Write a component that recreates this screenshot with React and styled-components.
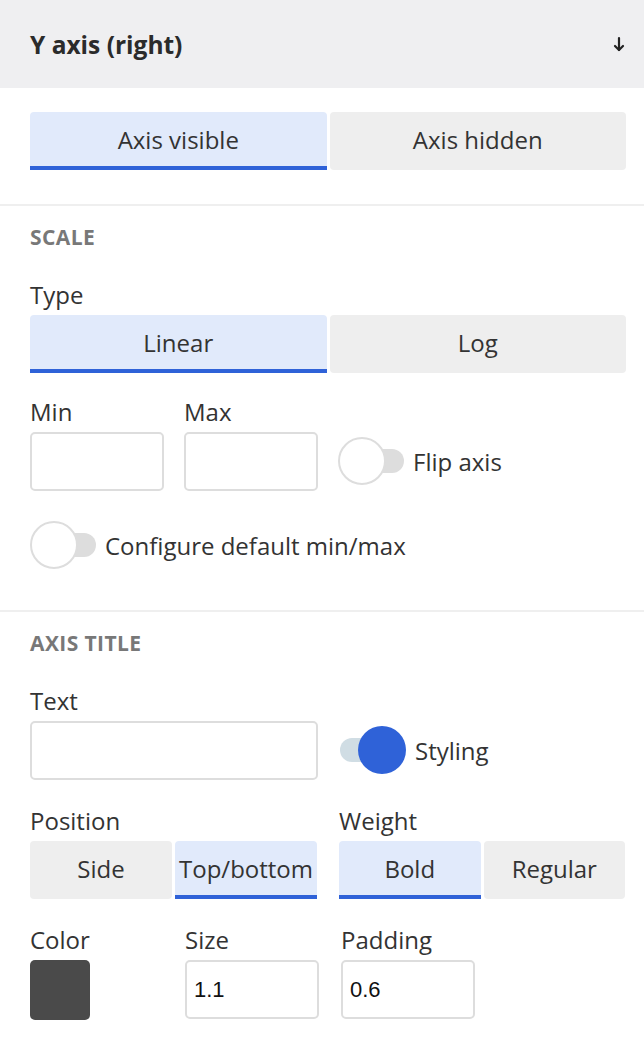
import styled, { createGlobalStyle } from 'styled-components';

const GlobalStyle = createGlobalStyle`
  html, body {
    margin: 0;
    padding: 0;
    background: #fff;
  }
  body {
    font-family: "Open Sans", "Noto Sans", sans-serif;
    color: #333;
  }
  * { box-sizing: border-box; }
`

const Panel = styled.div`
  width: 644px;
  background: #fff;
`

const Header = styled.div`
  height: 88px;
  background: #efeff1;
  display: flex;
  align-items: center;
  justify-content: space-between;
  padding: 0 18px 0 30px;
`

const Title = styled.h2`
  margin: 0;
  font-size: 24.5px;
  font-weight: 700;
  color: #2b2b2b;
`

const Section = styled.div`
  padding: ${p => p.pad || '24px 18px 34px 30px'};
  border-top: ${p => p.first ? 'none' : '2px solid #efefef'};
  display: flex;
  flex-direction: column;
`

const SectionTitle = styled.div`
  font-size: 21px;
  font-weight: 700;
  color: #787878;
  line-height: 24px;
  letter-spacing: 0.4px;
  margin-bottom: 33px;
`

const Label = styled.div`
  font-size: 24px;
  color: #333;
  line-height: 26px;
  margin-bottom: 7px;
`

const Segmented = styled.div`
  display: flex;
  gap: 3px;
  height: 58px;
  width: ${p => p.width || '100%'};
`

const SegButton = styled.button`
  flex: 1;
  border: none;
  margin: 0;
  padding: 0;
  font-family: inherit;
  font-size: 24px;
  color: #333;
  background: ${p => p.active ? '#e1eafb' : '#eeeeee'};
  border-bottom: 4px solid ${p => p.active ? '#2f62d8' : 'transparent'};
  border-radius: ${p => p.active ? '4px 4px 0 0' : '4px'};
  white-space: nowrap;
`

const Row = styled.div`
  display: flex;
  align-items: ${p => p.align || 'flex-start'};
  gap: ${p => p.gap || '20px'};
  margin-top: ${p => p.top || '0'};
`

const Field = styled.div`
  display: flex;
  flex-direction: column;
  width: ${p => p.width || 'auto'};
`

const ToggleField = styled.div`
  display: flex;
  margin-bottom: 6px;
`

const Input = styled.input`
  width: ${p => p.width || '134px'};
  height: 59px;
  border: 2px solid #dddddd;
  border-radius: 5px;
  font-family: "Liberation Sans", Arial, sans-serif;
  font-size: 22px;
  color: #111;
  padding: 0 7px;
  outline: none;
`

const Swatch = styled.div`
  width: 60px;
  height: 60px;
  border-radius: 5px;
  background: #4a4a4a;
`

const ToggleWrap = styled.label`
  display: flex;
  align-items: center;
  gap: 9px;
  font-size: 24px;
  color: #333;
`

const Track = styled.span`
  position: relative;
  display: inline-block;
  width: 66px;
  height: 48px;
  flex: none;
  &::before {
    content: '';
    position: absolute;
    left: ${p => p.on ? '0' : '22px'};
    top: 12px;
    width: 44px;
    height: 24px;
    border-radius: 12px;
    background: ${p => p.on ? '#d0dde4' : '#dddddd'};
  }
`

const Knob = styled.span`
  position: absolute;
  top: 0;
  left: ${p => p.on ? '18px' : '0'};
  width: 48px;
  height: 48px;
  border-radius: 50%;
  background: ${p => p.on ? '#2f62d8' : '#fff'};
  border: ${p => p.on ? 'none' : '2px solid #dddddd'};
`

function Toggle({ on, children }) {
  return (
    <ToggleWrap>
      <Track on={on}><Knob on={on} /></Track>
      {children}
    </ToggleWrap>
  );
}

const Arrow = () => (
  <svg width="14" height="18" viewBox="0 0 14 18" fill="none" stroke="#222" strokeWidth="2.2" strokeLinecap="round" strokeLinejoin="round">
    <path d="M7 3 V15" />
    <path d="M3 11 L7 15 L11 11" />
  </svg>
);

export default function App() {
  return (
    <Panel>
      <GlobalStyle />
      <Header>
        <Title>Y axis (right)</Title>
        <Arrow />
      </Header>

      <Section first pad="24px 18px 34px 30px">
        <Segmented>
          <SegButton active>Axis visible</SegButton>
          <SegButton>Axis hidden</SegButton>
        </Segmented>
      </Section>

      <Section pad="19px 18px 41px 30px">
        <SectionTitle>SCALE</SectionTitle>
        <Label>Type</Label>
        <Segmented>
          <SegButton active>Linear</SegButton>
          <SegButton>Log</SegButton>
        </Segmented>
        <Row gap="20px" align="flex-end" top="26px">
          <Field>
            <Label>Min</Label>
            <Input />
          </Field>
          <Field>
            <Label>Max</Label>
            <Input />
          </Field>
          <ToggleField>
            <Toggle>Flip axis</Toggle>
          </ToggleField>
        </Row>
        <Row top="30px">
          <Toggle>Configure default min/max</Toggle>
        </Row>
      </Section>

      <Section pad="19px 18px 30px 30px">
        <SectionTitle>AXIS TITLE</SectionTitle>
        <Row gap="22px" align="flex-end">
          <Field>
            <Label>Text</Label>
            <Input width="288px" />
          </Field>
          <ToggleField>
            <Toggle on>Styling</Toggle>
          </ToggleField>
        </Row>
        <Row gap="22px" top="28px">
          <Field width="287px">
            <Label>Position</Label>
            <Segmented>
              <SegButton>Side</SegButton>
              <SegButton active>Top/bottom</SegButton>
            </Segmented>
          </Field>
          <Field width="286px">
            <Label>Weight</Label>
            <Segmented>
              <SegButton active>Bold</SegButton>
              <SegButton>Regular</SegButton>
            </Segmented>
          </Field>
        </Row>
        <Row gap="22px" top="28px">
          <Field width="133px">
            <Label>Color</Label>
            <Swatch />
          </Field>
          <Field>
            <Label>Size</Label>
            <Input defaultValue="1.1" />
          </Field>
          <Field>
            <Label>Padding</Label>
            <Input defaultValue="0.6" />
          </Field>
        </Row>
      </Section>
    </Panel>
  );
}
